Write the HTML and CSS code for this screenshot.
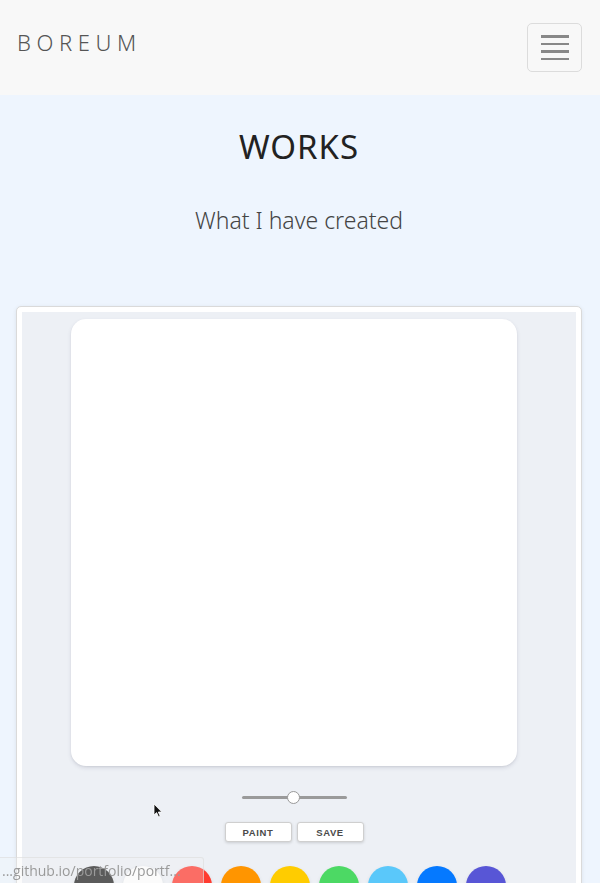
FILE: index.html
```html
<!DOCTYPE html>
<html lang="en">
<head>
<meta charset="utf-8">
<title>Boreum</title>
<link rel="stylesheet" href="styles.css">
</head>
<body>
<header class="header">
  <div class="logo">BOREUM</div>
  <button class="menu-btn" aria-label="menu">
    <span class="bar"></span><span class="bar"></span><span class="bar"></span><span class="bar"></span>
  </button>
</header>
<section class="works">
  <h1 class="title">WORKS</h1>
  <p class="subtitle">What I have created</p>
  <div class="card">
    <div class="frame">
      <div class="canvas"></div>
      <div class="range"><span class="track"></span><span class="thumb"></span></div>
      <div class="buttons">
        <button class="ctl">PAINT</button>
        <button class="ctl">SAVE</button>
      </div>
      <div class="colors">
        <span class="dot c-dark"></span>
        <span class="dot c-white"></span>
        <span class="dot c-red"></span>
        <span class="dot c-orange"></span>
        <span class="dot c-yellow"></span>
        <span class="dot c-green"></span>
        <span class="dot c-sky"></span>
        <span class="dot c-blue"></span>
        <span class="dot c-purple"></span>
      </div>
    </div>
  </div>
</section>
<svg class="cursor" width="10" height="16" viewBox="0 0 10 16"><path d="M1 1 L1 12 L3.6 9.6 L5.6 14 L7.2 13.3 L5.3 9 L8.8 9 Z" fill="#111" stroke="#fff" stroke-width="0.8"/></svg>
<div class="status">...github.io/portfolio/portf...</div>
</body>
</html>
```
FILE: styles.css
```css
html, body { margin: 0; padding: 0; }
body {
  width: 600px;
  height: 883px;
  overflow: hidden;
  font-family: "Noto Sans", "Open Sans", sans-serif;
  background: #eef5fe;
}
.header {
  height: 95px;
  background: #f8f8f8;
  display: flex;
  justify-content: space-between;
  align-items: flex-start;
  padding: 0 18px 0 17px;
  box-sizing: border-box;
}
.logo {
  margin-top: 27px;
  font-size: 22px;
  font-weight: 300;
  letter-spacing: 5.6px;
  color: #555;
  line-height: 30px;
}
.menu-btn {
  margin-top: 23px;
  width: 55px;
  height: 49px;
  border: 1px solid #dcdcdc;
  border-radius: 5px;
  background: #f8f8f8;
  display: flex;
  flex-direction: column;
  align-items: center;
  justify-content: center;
  gap: 5px;
  padding: 0;
}
.bar { display: block; width: 28px; height: 2.5px; background: #888; }
.works {
  display: flex;
  flex-direction: column;
  align-items: center;
  padding: 0 18px 0 16px;
}
.title {
  margin: 28px 0 0;
  font-size: 33px;
  font-weight: 400;
  letter-spacing: 1px;
  color: #222;
  line-height: 48px;
}
.subtitle {
  margin: 33px 0 0;
  font-size: 23px;
  font-weight: 300;
  color: #444;
  line-height: 32px;
}
.card {
  margin-top: 70px;
  width: 100%;
  background: #fff;
  border: 1px solid #dadada;
  border-radius: 5px;
  box-shadow: 0 1px 4px rgba(0,0,0,0.08);
  padding: 5px;
  box-sizing: border-box;
}
.frame {
  background: #edf0f5;
  display: flex;
  flex-direction: column;
  align-items: center;
  padding: 7px 10px 40px 0;
}
.canvas {
  width: 446px;
  height: 447px;
  background: #fff;
  border-radius: 15px;
  box-shadow: 0 2px 4px rgba(50,50,93,0.12), 0 1px 2px rgba(0,0,0,0.06);
}
.range {
  position: relative;
  margin-top: 25px;
  width: 105px;
  height: 12px;
  display: flex;
  align-items: center;
}
.track { display: block; width: 100%; height: 3px; border-radius: 2px; background: #9a9a9a; }
.thumb {
  position: absolute;
  left: 45px;
  top: 0;
  width: 11px;
  height: 11px;
  border-radius: 50%;
  background: #fff;
  border: 1px solid #999;
}
.buttons {
  margin-top: 19px;
  display: flex;
  gap: 5px;
}
.ctl {
  width: 67px;
  height: 20px;
  background: #fff;
  border: 1px solid #cfcfcf;
  border-radius: 3px;
  box-shadow: 0 1px 3px rgba(0,0,0,0.15);
  font-family: "Liberation Sans", Arial, sans-serif;
  font-weight: 700;
  font-size: 9.5px;
  letter-spacing: 0.6px;
  color: #4a4a4a;
  padding: 0;
}
.colors {
  margin-top: 24px;
  display: flex;
  gap: 9px;
  margin-right: 8px;
}
.dot { width: 40px; height: 40px; border-radius: 50%; box-shadow: 0 2px 4px rgba(0,0,0,0.1); }
.c-dark { background: #222; }
.c-white { background: #fff; }
.c-red { background: #ff3b30; }
.c-orange { background: #ff9500; }
.c-yellow { background: #ffcc00; }
.c-green { background: #4cd964; }
.c-sky { background: #5ac8fa; }
.c-blue { background: #0579ff; }
.c-purple { background: #5856d6; }
.cursor { position: absolute; left: 153px; top: 803px; }
.status {
  position: fixed;
  left: 0;
  bottom: 0;
  width: 204px;
  height: 26px;
  box-sizing: border-box;
  background: rgba(242,242,242,0.28);
  border-top: 1px solid rgba(220,220,220,0.6);
  border-right: 1px solid rgba(220,220,220,0.6);
  border-top-right-radius: 3px;
  font-family: "Open Sans", "Noto Sans", sans-serif;
  font-size: 14px;
  line-height: 25px;
  color: #9a9a9a;
  padding-left: 2px;
  white-space: nowrap;
}
```
